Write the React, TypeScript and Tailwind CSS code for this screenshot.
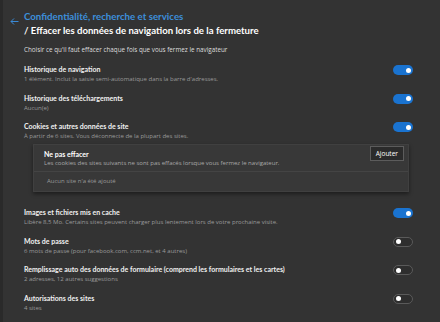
import React from "react";

type Row = { title: string; sub: string; on: boolean };

const top: Row[] = [
  { title: "Historique de navigation", sub: "1 élément. Inclut la saisie semi-automatique dans la barre d'adresses.", on: true },
  { title: "Historique des téléchargements", sub: "Aucun(e)", on: true },
  { title: "Cookies et autres données de site", sub: "À partir de 6 sites. Vous déconnecte de la plupart des sites.", on: true },
];

const bottom: Row[] = [
  { title: "Images et fichiers mis en cache", sub: "Libère 8,5 Mo. Certains sites peuvent charger plus lentement lors de votre prochaine visite.", on: true },
  { title: "Mots de passe", sub: "6 mots de passe (pour facebook.com, ccm.net, et 4 autres)", on: false },
  { title: "Remplissage auto des données de formulaire (comprend les formulaires et les cartes)", sub: "2 adresses, 12 autres suggestions", on: false },
  { title: "Autorisations des sites", sub: "4 sites", on: false },
];

function Toggle({ on }: { on: boolean }) {
  return on ? (
    <div className="w-[20px] h-[10px] rounded-full bg-[#1a73d0] flex items-center justify-end pr-[2px]">
      <div className="w-[5px] h-[5px] rounded-full bg-white" />
    </div>
  ) : (
    <div className="w-[20px] h-[10px] rounded-full border border-[#5a5a5a] bg-[#2e2e2e] flex items-center pl-[2px]">
      <div className="w-[5px] h-[5px] rounded-full bg-white" />
    </div>
  );
}

function SettingRow({ row }: { row: Row }) {
  return (
    <div className="flex items-start justify-between h-[20px]">
      <div>
        <div className="text-[7px] font-bold text-[#f0f0f0] leading-[10px]" style={{ fontFamily: "Lato, sans-serif" }}>{row.title}</div>
        <div className="text-[6px] text-[#9a9a9a] leading-[10px]">{row.sub}</div>
      </div>
      <div className="mt-[1px]">
        <Toggle on={row.on} />
      </div>
    </div>
  );
}

export default function App() {
  return (
    <div className="w-[440px] h-[322px] bg-[#333333] border-l-[3px] border-[#2a2a2a] overflow-hidden" style={{ fontFamily: '"Open Sans", sans-serif' }}>
      <div className="pl-[21px] pr-[27px] pt-[10px]" >
        <div className="relative" style={{ fontFamily: "Lato, sans-serif" }}>
          <svg className="absolute left-[-14px] top-[8px]" width="9" height="7" viewBox="0 0 9 7">
            <path d="M4 0.5 L1 3.5 L4 6.5 M1 3.5 H8.5" stroke="#3a8ad6" strokeWidth="1" fill="none" />
          </svg>
          <div className="text-[9.7px] font-bold text-[#3d8fdb] leading-[13px]">Confidentialité, recherche et services</div>
          <div className="text-[9.6px] font-bold text-white leading-[15px]">/ Effacer les données de navigation lors de la fermeture</div>
        </div>
        <div className="text-[6.3px] text-[#dcdcdc] mt-[7px] leading-[10px]">Choisir ce qu'il faut effacer chaque fois que vous fermez le navigateur</div>
        <div className="mt-[9px] flex flex-col gap-[8.5px]">
          {top.map((r) => (
            <SettingRow key={r.title} row={r} />
          ))}
        </div>
        <div className="ml-[9px] mr-[4px] mt-[3px] bg-[#383838] border border-[#404040] shadow-[0_2px_4px_rgba(0,0,0,0.45)]">
          <div className="flex items-start justify-between pl-[10px] pr-[4px] pt-[1px] pb-[3px] border-b border-[#444444]">
            <div className="pt-[4px]">
              <div className="text-[7px] font-bold text-white leading-[9px]" style={{ fontFamily: "Lato, sans-serif" }}>Ne pas effacer</div>
              <div className="text-[6px] text-[#a8a8a8] leading-[9px]">Les cookies des sites suivants ne sont pas effacés lorsque vous fermez le navigateur.</div>
            </div>
            <div className="px-[5px] h-[15px] flex items-center text-[6.5px] text-white bg-[#2b2b2b] border border-[#5c5c5c]">Ajouter</div>
          </div>
          <div className="pl-[13px] h-[19px] flex items-center text-[6px] text-[#9a9a9a]">Aucun site n'a été ajouté</div>
        </div>
        <div className="mt-[15px] flex flex-col gap-[8.5px]">
          {bottom.map((r) => (
            <SettingRow key={r.title} row={r} />
          ))}
        </div>
      </div>
    </div>
  );
}
